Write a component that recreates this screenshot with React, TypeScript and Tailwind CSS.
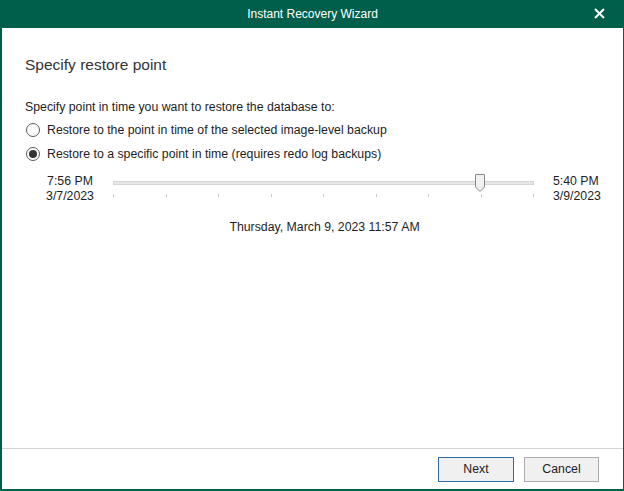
import React from "react";

const ticks = [0, 1, 2, 3, 4, 5, 6, 7, 8];

const Radio = ({ checked, label }: { checked?: boolean; label: string }) => (
  <div className="flex items-center h-6">
    <span className="w-[14px] h-[14px] rounded-full border border-[#5a5a5a] bg-white flex items-center justify-center ml-[24px] mr-[7px]">
      {checked && <span className="w-[8px] h-[8px] rounded-full bg-[#333]" />}
    </span>
    <span>{label}</span>
  </div>
);

export default function App() {
  return (
    <div
      className="w-[624px] h-[491px] flex flex-col bg-white text-[12.3px] text-[#1e1e1e] border-l-2 border-r border-b-2 border-[#005f4b]"
      style={{ fontFamily: '"Liberation Sans", Arial, sans-serif' }}
    >
      <div className="h-[28px] -mx-[1px] bg-[#005f4b] text-white flex items-center justify-center relative shrink-0">
        <span className="text-[12px]">Instant Recovery Wizard</span>
        <svg className="absolute right-[19px] top-[8px]" width="11" height="11" viewBox="0 0 11 11">
          <path d="M1 1L10 10M10 1L1 10" stroke="white" strokeWidth="2" />
        </svg>
      </div>

      <div className="flex-1 flex flex-col">
        <div className="text-[15.5px] text-[#333] pl-[23px] pt-[25px] h-[68px]">Specify restore point</div>
        <div className="pl-[23px] h-[22px] flex items-center">Specify point in time you want to restore the database to:</div>
        <Radio label="Restore to the point in time of the selected image-level backup" />
        <Radio checked label="Restore to a specific point in time (requires redo log backups)" />

        <div className="flex items-start mt-[8px]">
          <div className="w-[111px] pl-[44px] text-center leading-[15px]">
            <div className="w-[48px]">7:56 PM</div>
            <div className="w-[48px]">3/7/2023</div>
          </div>
          <div className="w-[421px] relative h-[30px]">
            <div className="absolute left-0 right-0 top-[7px] h-[4px] bg-[#e7e7e7] border border-[#d6d6d6]" />
            {ticks.map((t) => (
              <div
                key={t}
                className="absolute top-[20px] w-[1px] h-[3px] bg-[#c8c8c8]"
                style={{ left: `${t * 52.5}px` }}
              />
            ))}
            <svg className="absolute left-[361px] top-[0px]" width="12" height="19" viewBox="0 0 12 19">
              <path d="M1.5 0.5H10.5V13L6 17.5L1.5 13Z" fill="#f0f0f0" stroke="#8a8a8a" />
            </svg>
          </div>
          <div className="ml-[19px] leading-[15px] text-left">
            <div>5:40 PM</div>
            <div>3/9/2023</div>
          </div>
        </div>

        <div className="mt-[14px] text-center pl-[24px]">Thursday, March 9, 2023 11:57 AM</div>
      </div>

      <div className="h-[41px] border-t border-[#d4d4d4] flex items-start justify-end pt-[8px] pr-[24px] gap-[10px] shrink-0">
        <button className="w-[76px] h-[25px] border border-[#2f6da3] bg-[#f0f0f0]">Next</button>
        <button className="w-[75px] h-[25px] border border-[#adadad] bg-[#f0f0f0]">Cancel</button>
      </div>
    </div>
  );
}
